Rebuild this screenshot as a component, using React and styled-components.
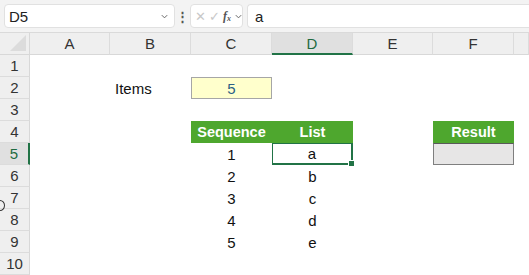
import React from 'react';
import styled, { createGlobalStyle } from 'styled-components';

const GlobalStyle = createGlobalStyle`
	html, body {
		margin: 0;
		padding: 0;
		background: #ffffff;
		font-family: 'Liberation Sans', Arial, sans-serif;
		overflow: hidden;
	}
`;

const COLUMNS = ['A', 'B', 'C', 'D', 'E', 'F', ''];
const ROWS = [1, 2, 3, 4, 5, 6, 7, 8, 9, 10];
const SEQUENCE = ['1', '2', '3', '4', '5'];
const LIST = ['a', 'b', 'c', 'd', 'e'];

const App = () => {
	return (
		<Page>
			<GlobalStyle />
			<FormulaBar>
				<NameBox>
					<span>D5</span>
					<Chevron />
				</NameBox>
				<Grip>⋮</Grip>
				<ActionBox>
					<Glyph>✕</Glyph>
					<Glyph>✓</Glyph>
					<Fx>
						f<sub>x</sub>
					</Fx>
					<Chevron />
				</ActionBox>
				<FormulaInput>a</FormulaInput>
			</FormulaBar>

			<Sheet>
				<Corner>
					<CornerTriangle />
				</Corner>
				{COLUMNS.map((c, i) => (
					<ColHeader key={i} $active={c === 'D'}>
						{c}
					</ColHeader>
				))}

				{ROWS.map((r) => (
					<React.Fragment key={r}>
						<RowHeader $active={r === 5}>{r}</RowHeader>
						{COLUMNS.map((c, i) => renderCell(r, c || 'G', i))}
					</React.Fragment>
				))}
			</Sheet>
			<Cursor />
		</Page>
	);
};

function renderCell(r, c) {
	const key = `${c}${r}`;
	if (key === 'B2') return <LabelCell key={key}>Items</LabelCell>;
	if (key === 'C2') return <InputCell key={key}>5</InputCell>;
	if (key === 'C4') return <HeadCell key={key}>Sequence</HeadCell>;
	if (key === 'D4') return <HeadCell key={key}>List</HeadCell>;
	if (key === 'F4') return <HeadCell key={key}>Result</HeadCell>;
	if (key === 'F5') return <ResultCell key={key} />;
	if (r >= 5 && r <= 9 && c === 'C') return <Cell key={key}>{SEQUENCE[r - 5]}</Cell>;
	if (key === 'D5')
		return (
			<SelectedCell key={key}>
				a
				<FillHandle />
			</SelectedCell>
		);
	if (r >= 6 && r <= 9 && c === 'D') return <Cell key={key}>{LIST[r - 5]}</Cell>;
	return <Cell key={key} />;
}

const Chevron = () => (
	<ChevronSvg viewBox='0 0 10 10' width='9' height='9'>
		<path d='M2 3.5 L5 6.5 L8 3.5' fill='none' stroke='currentColor' strokeWidth='1.1' />
	</ChevronSvg>
);

const Page = styled.div`
	position: relative;
	width: 529px;
	height: 275px;
	overflow: hidden;
	background: #ffffff;
`;

const FormulaBar = styled.div`
	display: flex;
	align-items: center;
	height: 33px;
	padding: 0 0 0 4px;
	box-sizing: border-box;
	background: #f3f3f3;
	border-bottom: 1px solid #dadada;
`;

const BoxBase = styled.div`
	display: flex;
	align-items: center;
	height: 24px;
	box-sizing: border-box;
	background: #ffffff;
	border: 1px solid #e1e1e1;
	border-radius: 4px;
`;

const NameBox = styled(BoxBase)`
	width: 171px;
	padding: 0 5px 0 4px;
	justify-content: space-between;
	font-size: 15px;
	color: #222222;
`;

const ChevronSvg = styled.svg`
	color: #666666;
	flex: none;
`;

const Grip = styled.div`
	width: 15px;
	text-align: center;
	font-size: 13px;
	color: #555555;
	font-weight: bold;
`;

const ActionBox = styled(BoxBase)`
	width: 53px;
	padding: 0 3px 0 4px;
	gap: 3px;
	color: #c4c4c4;
`;

const Glyph = styled.span`
	font-size: 13px;
	font-family: 'DejaVu Sans', sans-serif;
	font-weight: 200;
	color: #c8c8c8;
`;

const Fx = styled.span`
	font-family: 'Liberation Serif', serif;
	font-style: italic;
	font-size: 12px;
	color: #555555;
	font-weight: bold;

	sub {
		font-size: 8px;
		vertical-align: -1px;
	}
`;

const FormulaInput = styled(BoxBase)`
	flex: 1;
	margin-left: 4px;
	padding-left: 7px;
	border-right: none;
	border-radius: 4px 0 0 4px;
	font-size: 15px;
	color: #222222;
`;

const Sheet = styled.div`
	display: grid;
	grid-template-columns: 30px 80px 81px 81px 81px 80px 81px 15px;
	grid-auto-rows: 22px;
`;

const Corner = styled.div`
	position: relative;
	background: #efefef;
	border-right: 1px solid #d8d8d8;
	border-bottom: 1px solid #d8d8d8;
`;

const CornerTriangle = styled.div`
	position: absolute;
	right: 3px;
	bottom: 3px;
	width: 0;
	height: 0;
	border-left: 16px solid transparent;
	border-bottom: 16px solid #dcdcdc;
`;

const ColHeader = styled.div`
	display: flex;
	align-items: center;
	justify-content: center;
	box-sizing: border-box;
	background: ${(p) => (p.$active ? '#e0e0e0' : '#efefef')};
	border-right: 1px solid #dcdcdc;
	border-bottom: ${(p) => (p.$active ? '2px solid #217346' : '1px solid #d8d8d8')};
	font-size: 15px;
	color: ${(p) => (p.$active ? '#1e6b41' : '#333333')};
`;

const RowHeader = styled.div`
	display: flex;
	align-items: center;
	justify-content: center;
	box-sizing: border-box;
	background: ${(p) => (p.$active ? '#e0e0e0' : '#efefef')};
	border-bottom: 1px solid #dcdcdc;
	border-right: ${(p) => (p.$active ? '2px solid #217346' : '1px solid #d8d8d8')};
	font-size: 15px;
	color: ${(p) => (p.$active ? '#1e6b41' : '#333333')};
`;

const Cell = styled.div`
	display: flex;
	align-items: center;
	justify-content: center;
	box-sizing: border-box;
	font-size: 15px;
	color: #111111;
`;

const LabelCell = styled(Cell)`
	justify-content: flex-start;
	padding-left: 5px;
`;

const InputCell = styled(Cell)`
	background: #ffffcc;
	border: 1px solid #a6a6a6;
	color: #2b5f86;
`;

const HeadCell = styled(Cell)`
	background: #4ea72e;
	color: #ffffff;
	font-weight: bold;
	font-size: 14.5px;
`;

const ResultCell = styled(Cell)`
	background: #e7e6e6;
	border: 1px solid #7f7f7f;
	border-top-color: #595959;
`;

const SelectedCell = styled(Cell)`
	position: relative;
	border: 2px solid #217346;
	border-left-width: 1px;
	border-top-width: 1px;
`;

const FillHandle = styled.div`
	position: absolute;
	right: -4px;
	bottom: -4px;
	width: 5px;
	height: 5px;
	background: #217346;
	border: 1px solid #ffffff;
`;

const Cursor = styled.div`
	position: absolute;
	left: -5px;
	top: 200px;
	width: 8px;
	height: 9px;
	border: 1px solid #333333;
	border-radius: 50%;
`;

export default App;
